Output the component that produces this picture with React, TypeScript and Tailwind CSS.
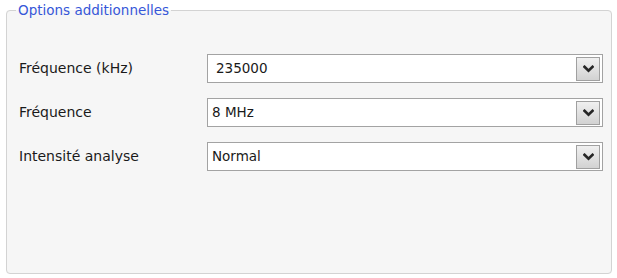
import React from 'react';

const rows = [
  { label: 'Fréquence (kHz)', value: '235000', editable: true },
  { label: 'Fréquence', value: '8 MHz', editable: false },
  { label: 'Intensité analyse', value: 'Normal', editable: false },
];

const Chevron = () => (
  <svg width="11" height="8" viewBox="0 0 11 8">
    <path d="M1.5 1.8 L5.5 5.6 L9.5 1.8" fill="none" stroke="#262626" strokeWidth="2.6" strokeLinecap="square" />
  </svg>
);

const Combo: React.FC<{ value: string; editable: boolean }> = ({ value, editable }) => (
  <div className="flex-1 h-[29px] flex items-center bg-white border border-[#a3a3a3] pr-[2px]">
    <span className={`flex-1 text-[13.5px] text-[#1a1a1a] ${editable ? 'pl-[8px]' : 'pl-[4px]'}`}>{value}</span>
    <div className="w-[24px] h-[24px] flex items-center justify-center border border-[#a0a0a0] bg-gradient-to-b from-[#f0f0f0] to-[#d2d2d2]">
      <Chevron />
    </div>
  </div>
);

export default function App() {
  return (
    <div className="w-[617px] h-[278px] bg-white pt-[2px] pl-[6px] pr-[5px] pb-[4px]" style={{ fontFamily: '"DejaVu Sans", sans-serif' }}>
      <fieldset className="h-full border border-[#d3d3d3] rounded-[4px] bg-[#f6f6f6] pl-[12px] pr-[8px] pt-[36px] m-0 min-w-0">
        <legend className="ml-[-3px] px-[2px] text-[13.5px] text-[#3657d8] leading-[16px]">Options additionnelles</legend>
        <div className="flex flex-col gap-[15px]">
          {rows.map((r) => (
            <div key={r.label} className="flex items-center">
              <span className="w-[188px] text-[14px] text-[#1a1a1a]">{r.label}</span>
              <Combo value={r.value} editable={r.editable} />
            </div>
          ))}
        </div>
      </fieldset>
    </div>
  );
}
